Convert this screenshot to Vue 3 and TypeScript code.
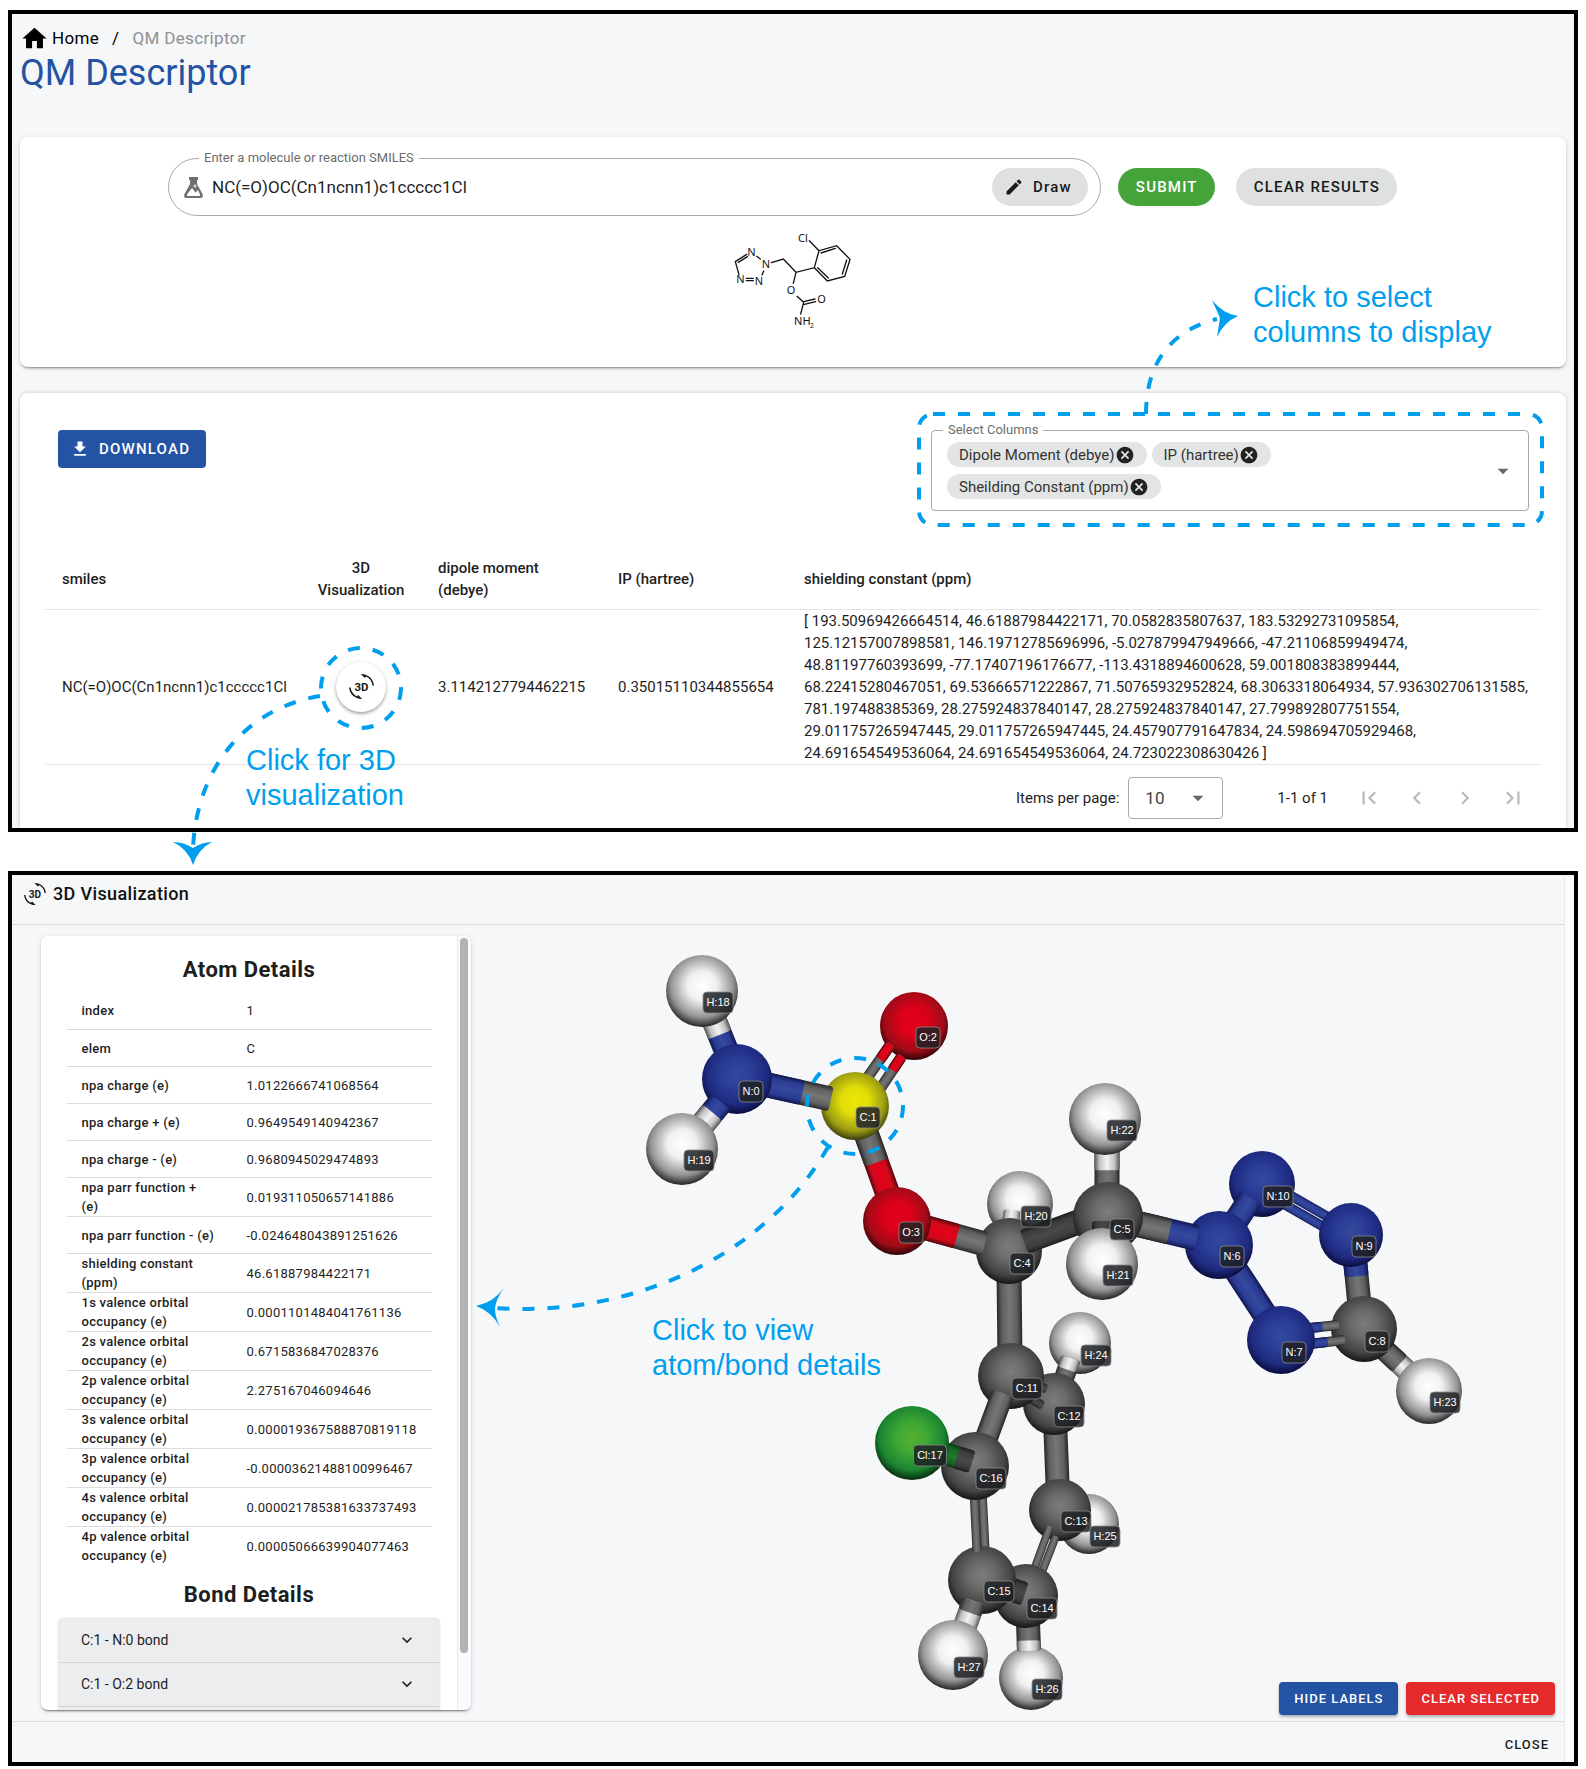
<script setup lang="ts">
import { ref } from 'vue'

const smiles = ref('NC(=O)OC(Cn1ncnn1)c1ccccc1Cl')
const pageSize = ref('10')
const columns = ref(['Dipole Moment (debye)', 'IP (hartree)', 'Sheilding Constant (ppm)'])
const shielding = [
  '[ 193.50969426664514, 46.61887984422171, 70.0582835807637, 183.53292731095854,',
  '125.12157007898581, 146.19712785696996, -5.027879947949666, -47.21106859949474,',
  '48.81197760393699, -77.17407196176677, -113.4318894600628, 59.001808383899444,',
  '68.22415280467051, 69.53666571222867, 71.50765932952824, 68.3063318064934, 57.936302706131585,',
  '781.197488385369, 28.275924837840147, 28.275924837840147, 27.799892807751554,',
  '29.011757265947445, 29.011757265947445, 24.457907791647834, 24.598694705929468,',
  '24.691654549536064, 24.691654549536064, 24.723022308630426 ]',
]
const pagers = [
  { name: 'First page', d: 'M18.41,16.59L13.82,12L18.41,7.41L17,6L11,12L17,18L18.41,16.59M6,6H8V18H6V6Z' },
  { name: 'Previous page', d: 'M15.41,16.58L10.83,12L15.41,7.41L14,6L8,12L14,18L15.41,16.58Z' },
  { name: 'Next page', d: 'M8.59,16.58L13.17,12L8.59,7.41L10,6L16,12L10,18L8.59,16.58Z' },
  { name: 'Last page', d: 'M5.59,7.41L10.18,12L5.59,16.59L7,18L13,12L7,6L5.59,7.41M16,6H18V18H16V6Z' },
]
const details: [string, string][] = [
  ['index', '1'],
  ['elem', 'C'],
  ['npa charge (e)', '1.0122666741068564'],
  ['npa charge + (e)', '0.9649549140942367'],
  ['npa charge - (e)', '0.9680945029474893'],
  ['npa parr function +\n(e)', '0.019311050657141886'],
  ['npa parr function - (e)', '-0.024648043891251626'],
  ['shielding constant\n(ppm)', '46.61887984422171'],
  ['1s valence orbital\noccupancy (e)', '0.0001101484041761136'],
  ['2s valence orbital\noccupancy (e)', '0.6715836847028376'],
  ['2p valence orbital\noccupancy (e)', '2.275167046094646'],
  ['3s valence orbital\noccupancy (e)', '0.000019367588870819118'],
  ['3p valence orbital\noccupancy (e)', '-0.00003621488100996467'],
  ['4s valence orbital\noccupancy (e)', '0.000021785381633737493'],
  ['4p valence orbital\noccupancy (e)', '0.00005066639904077463'],
]
const bonds = ['C:1 - N:0 bond', 'C:1 - O:2 bond']

interface Atom { kind: 'atom'; el: string; x: number; y: number; r: number }
interface Stick { kind: 'stick'; x: number; y: number; len: number; angle: number; w: number; fill: string }
type Shape = Atom | Stick

const atom = (el: string, x: number, y: number, r: number): Atom[] => [{ kind: 'atom', el, x, y, r }]

// A stick runs from a to b; the part before m takes the first colour, the rest the second.
function stick(w: number, from: string, to: string, x1: number, y1: number, x2: number, y2: number, m = 0.5): Stick[] {
  const len = Math.hypot(x2 - x1, y2 - y1)
  const angle = (Math.atan2(y2 - y1, x2 - x1) * 180) / Math.PI
  const end: Stick = { kind: 'stick', x: x1, y: y1, len, angle, w, fill: to }
  return from === to ? [end] : [end, { ...end, len: len * m, fill: from }]
}

// Shapes from the back of the scene to the front.
const shapes: Shape[] = [
  ...atom('H', 1020, 1204, 33),
  ...stick(17, 'h', 'h', 1012, 1210, 1010, 1230),
  ...atom('O', 914, 1026, 34),
  ...stick(11, 'o', 'c', 891, 1044, 865, 1081, 0.42),
  ...stick(11, 'o', 'c', 902, 1056, 878, 1092, 0.4),
  ...stick(25, 'c', 'o', 862, 1122, 890, 1200, 0.52),
  ...atom('Y', 855, 1106, 34),
  ...stick(25, 'n', 'c', 745, 1080, 831, 1099, 0.67),
  ...stick(25, 'h', 'n', 706, 1000, 730, 1060, 0.58),
  ...atom('N', 737, 1079, 35),
  ...atom('H', 702, 991, 36),
  ...stick(25, 'h', 'n', 688, 1142, 721, 1102, 0.74),
  ...atom('H', 682, 1149, 36),
  ...stick(25, 'c', 'c', 1009, 1270, 1010, 1360),
  ...atom('C', 1009, 1251, 33),
  ...stick(25, 'o', 'c', 905, 1222, 985, 1244, 0.65),
  ...atom('O', 897, 1221, 34),
  ...stick(25, 'd', 'd', 1024, 1242, 1084, 1220),
  ...stick(25, 'h', 'c', 1107, 1140, 1107, 1195, 0.55),
  ...stick(10, 'n', 'n', 1288, 1194, 1335, 1221),
  ...stick(10, 'n', 'n', 1282, 1203, 1329, 1230),
  ...stick(24, 'n', 'c', 1354, 1250, 1360, 1310, 0.44),
  ...atom('N', 1351, 1235, 32),
  ...atom('N', 1262, 1184, 33),
  ...stick(25, 'n', 'n', 1251, 1198, 1230, 1230),
  ...stick(25, 'n', 'n', 1226, 1255, 1275, 1330),
  ...stick(22, 'c', 'h', 1375, 1341, 1415, 1378, 0.62),
  ...atom('C', 1364, 1329, 33),
  ...stick(10, 'n', 'c', 1300, 1329, 1339, 1325, 0.58),
  ...stick(10, 'n', 'c', 1300, 1345, 1345, 1340, 0.62),
  ...atom('N', 1281, 1340, 34),
  ...atom('N', 1219, 1245, 34),
  ...stick(26, 'c', 'n', 1125, 1221, 1197, 1238, 0.62),
  ...atom('C', 1108, 1217, 35),
  ...atom('H', 1105, 1119, 36),
  ...stick(22, 'd', 'd', 1103, 1221, 1103, 1240),
  ...atom('H', 1102, 1264, 36),
  ...atom('H', 1429, 1391, 33),
  ...atom('H', 1080, 1343, 31),
  ...stick(20, 'h', 'c', 1071, 1358, 1060, 1390, 0.36),
  ...atom('H', 1089, 1524, 30),
  ...stick(24, 'c', 'c', 1055, 1420, 1058, 1495),
  ...atom('C', 1054, 1404, 31),
  ...atom('C', 1060, 1510, 31),
  ...stick(9, 'd', 'd', 1047, 1389, 1030, 1384),
  ...stick(9, 'd', 'd', 1043, 1406, 1020, 1392),
  ...stick(8, 'c', 'c', 1050, 1526, 1034, 1570),
  ...stick(8, 'c', 'c', 1056, 1536, 1042, 1572),
  ...atom('C', 1011, 1376, 33),
  ...atom('H', 1031, 1678, 32),
  ...stick(24, 'h', 'c', 1029, 1651, 1028, 1622, 0.36),
  ...atom('C', 1026, 1596, 32),
  ...stick(24, 'd', 'd', 1025, 1594, 1000, 1586),
  ...stick(23, 'c', 'c', 1003, 1393, 982, 1450),
  ...stick(9, 'c', 'c', 985, 1549, 982, 1490),
  ...atom('C', 982, 1580, 34),
  ...stick(9, 'c', 'c', 977, 1552, 974, 1490),
  ...atom('C', 975, 1466, 34),
  ...stick(23, 'd', 'g', 972, 1462, 930, 1449, 0.36),
  ...atom('G', 912, 1443, 37),
  ...stick(24, 'c', 'h', 974, 1601, 960, 1640, 0.3),
  ...atom('H', 953, 1655, 35),
]
const tags: [string, number, number][] = [
  ['H:18', 718, 1002], ['N:0', 751, 1091], ['H:19', 699, 1160], ['O:2', 928, 1037], ['C:1', 868, 1117],
  ['O:3', 911, 1232], ['C:4', 1022, 1263], ['H:20', 1036, 1216], ['H:22', 1122, 1130], ['C:5', 1122, 1229],
  ['H:21', 1118, 1275], ['N:10', 1278, 1196], ['N:6', 1232, 1256], ['N:9', 1364, 1246], ['N:7', 1294, 1352],
  ['C:8', 1377, 1341], ['H:23', 1445, 1402], ['H:24', 1096, 1355], ['C:11', 1027, 1388], ['C:12', 1069, 1416],
  ['Cl:17', 930, 1455], ['C:16', 991, 1478], ['C:13', 1076, 1521], ['H:25', 1105, 1536], ['C:15', 999, 1591],
  ['C:14', 1042, 1608], ['H:27', 969, 1667], ['H:26', 1047, 1689],
]
const tagWidth = (t: string) => (t.length === 3 ? 24 : t.length === 4 ? 30 : 33)

const atomStops: Record<string, string[]> = {
  H: ['#ffffff', '#f0f0f0', '#939393', '#1c1c1c'],
  C: ['#7c7c7b', '#6a6a69', '#444443', '#121212'],
  N: ['#34489b', '#2c3e97', '#1e2a80', '#080b34'],
  O: ['#e4001b', '#dc001a', '#a00c17', '#280306'],
  Y: ['#ece605', '#e2de08', '#9c9c12', '#35360d'],
  G: ['#58b030', '#3fa835', '#1c8531', '#05260c'],
}
const stickStops: Record<string, string[]> = {
  h: ['#8d8d8d', '#f3f3f3', '#c2c2c2', '#555555'],
  c: ['#4b4b4b', '#757675', '#5e5f5e', '#262626'],
  d: ['#2b2b2b', '#474847', '#3c3d3c', '#1d1d1d'],
  n: ['#24348c', '#34499c', '#2a3b93', '#10174e'],
  o: ['#a50013', '#e4001b', '#cf0a1b', '#55060c'],
  g: ['#14501f', '#1f7a2c', '#186425', '#0b3413'],
}
const isTwoLine = (s: string) => s.includes('\n')
</script>

<template>
  <div class="page">
    <section class="frame">
      <nav class="crumbs" aria-label="Breadcrumb">
        <svg class="home" viewBox="0 0 24 24"><path d="M10,20V14H14V20H19V12H22L12,3L2,12H5V20H10Z" /></svg>
        <a href="#home">Home</a>
        <span class="slash">/</span>
        <span class="here">QM Descriptor</span>
      </nav>
      <h1>QM Descriptor</h1>

      <form class="card query" @submit.prevent>
        <div class="query-row">
          <div class="outlined smiles">
            <label class="float" for="smiles">Enter a molecule or reaction SMILES</label>
            <svg class="flask" viewBox="0 0 19 21">
              <path fill="#6f6f6f" fill-rule="evenodd" d="M5 0h9v3h-1v4l5.500 10q1.500 4-2 4H2.500q-3.500 0-2-4L6 7V3H5zM3 17.500q-.6 1.500.8 1.500h11.400q1.400 0 .8-1.500L14 13l-2.500 2.500L8 11z" />
              <path stroke="#fff" d="M9.500 9h3M11 7.500v3" />
            </svg>
            <input id="smiles" v-model="smiles" type="text" spellcheck="false" />
            <button type="button" class="pill">
              <svg class="i20" viewBox="0 0 24 24"><path d="M20.71,7.04C21.1,6.65 21.1,6 20.71,5.63L18.37,3.29C18,2.9 17.35,2.9 16.96,3.29L15.12,5.12L18.87,8.87M3,17.25V21H6.75L17.81,9.93L14.06,6.18L3,17.25Z" /></svg>
              Draw
            </button>
          </div>
          <button type="submit" class="pill submit">SUBMIT</button>
          <button type="button" class="pill clear">CLEAR RESULTS</button>
        </div>
        <svg class="mol2d" viewBox="549 330 360 300" role="img" aria-label="2D structure">
          <g fill="none" stroke="#111" stroke-width="4" stroke-linecap="round">
            <path d="M590 406L556 428L567 467M592 413L565 430M620 412L631 420M641 456L636 468M589 478H610M589 485H610" />
            <path d="M664 431L700 420L738 460L793 446L832 486L884 472L900 421L860 380L807 395L793 446M803 446L835 477M877 465L890 423M856 388L813 402M807 395L778 365M738 460L730 493" />
            <path d="M741 532L761 550L752 585M761 548L795 540M763 556L797 548" />
          </g>
          <g class="mol-text">
            <text x="604" y="411">N</text><text x="648" y="446">N</text><text x="627" y="497">N</text><text x="571" y="493">N</text>
            <text x="759" y="368">Cl</text><text x="723" y="525">O</text><text x="815" y="552">O</text><text x="757" y="618">NH</text>
            <text x="786" y="627" class="sub">2</text>
          </g>
        </svg>
      </form>

      <div class="card results">
        <div class="toolbar">
          <button type="button" class="download">
            <svg class="i20" viewBox="0 0 24 24"><path d="M5,20H19V18H5M19,9H15V3H9V9H5L12,16L19,9Z" /></svg>
            DOWNLOAD
          </button>
          <div class="outlined columns" role="group" aria-labelledby="cols-label">
            <span id="cols-label" class="float">Select Columns</span>
            <div class="chips">
              <span v-for="c in columns" :key="c" class="chip">{{ c }}<button type="button" :aria-label="'Remove ' + c">
                <svg class="i20" viewBox="0 0 24 24"><path d="M12,2C17.53,2 22,6.47 22,12C22,17.53 17.53,22 12,22C6.47,22 2,17.53 2,12C2,6.47 6.47,2 12,2M15.59,7L12,10.59L8.41,7L7,8.41L10.59,12L7,15.59L8.41,17L12,13.41L15.59,17L17,15.59L13.41,12L17,8.41L15.59,7Z" /></svg>
              </button></span>
            </div>
            <button type="button" class="caret-btn" aria-label="Open columns">
              <svg class="caret" viewBox="0 0 24 24"><path d="M7,10L12,15L17,10H7Z" /></svg>
            </button>
          </div>
        </div>

        <table class="data">
          <colgroup><col class="w-smiles" /><col class="w-3d" /><col class="w-dip" /><col class="w-ip" /><col /></colgroup>
          <thead>
            <tr><th>smiles</th><th class="mid">3D<br />Visualization</th><th>dipole moment<br />(debye)</th><th>IP (hartree)</th><th>shielding constant (ppm)</th></tr>
          </thead>
          <tbody>
            <tr>
              <td>{{ smiles }}</td>
              <td class="mid">
                <button type="button" class="fab" aria-label="3D visualization">
                  <svg class="rot" viewBox="0 0 24 24"><path d="M7.520 21.480C4.250 19.940 1.910 16.760 1.550 13H.05C.56 19.160 5.710 24 12 24l.66-.03-3.810-3.810-1.330 1.320zM12 0l-.66.03 3.810 3.810 1.330-1.330c3.270 1.550 5.610 4.720 5.960 8.480h1.500C23.440 4.840 18.290 0 12 0z" /><text x="12" y="16">3D</text></svg>
                </button>
              </td>
              <td>3.1142127794462215</td>
              <td>0.35015110344855654</td>
              <td><div v-for="l in shielding" :key="l">{{ l }}</div></td>
            </tr>
          </tbody>
        </table>

        <div class="pager">
          <label for="page-size">Items per page:</label>
          <div class="size">
            <select id="page-size" v-model="pageSize"><option>10</option><option>25</option></select>
            <svg class="caret" viewBox="0 0 24 24"><path d="M7,10L12,15L17,10H7Z" /></svg>
          </div>
          <span class="range">1-1 of 1</span>
          <div class="nav">
            <button v-for="p in pagers" :key="p.name" type="button" :aria-label="p.name" disabled>
              <svg class="i26" viewBox="0 0 24 24"><path :d="p.d" /></svg>
            </button>
          </div>
        </div>
      </div>
    </section>

    <section class="frame dialog">
      <div class="dialog-main">
        <header>
          <svg class="rot small" viewBox="0 0 24 24"><path d="M7.520 21.480C4.250 19.940 1.910 16.760 1.550 13H.05C.56 19.160 5.710 24 12 24l.66-.03-3.810-3.810-1.330 1.320zM12 0l-.66.03 3.810 3.810 1.330-1.330c3.270 1.550 5.610 4.720 5.960 8.480h1.500C23.440 4.840 18.290 0 12 0z" /><text x="12" y="16">3D</text></svg>
          <h2>3D Visualization</h2>
        </header>
        <div class="dialog-body">
          <aside class="panel">
            <div class="panel-content">
              <h3>Atom Details</h3>
              <table class="props">
                <tbody>
                  <tr v-for="[k, v] in details" :key="k" :class="{ two: isTwoLine(k) }"><th scope="row">{{ k }}</th><td>{{ v }}</td></tr>
                </tbody>
              </table>
              <h3 class="second">Bond Details</h3>
              <div class="accordion">
                <details v-for="b in bonds" :key="b">
                  <summary>{{ b }}<svg class="i20" viewBox="0 0 24 24"><path d="M7.410,8.580L12,13.170L16.590,8.580L18,10L12,16L6,10L7.410,8.580Z" /></svg></summary>
                </details>
              </div>
            </div>
            <div class="track"><div class="thumb"></div></div>
          </aside>

          <div class="viewer">
            <svg class="scene" viewBox="471 925 1093 796" role="img" aria-label="3D molecule">
              <defs>
                <radialGradient v-for="(s, k) in atomStops" :id="'a' + k" :key="k" cx="50%" cy="43%" r="58%">
                  <stop offset="0" :stop-color="s[0]" /><stop offset=".35" :stop-color="s[1]" /><stop offset=".75" :stop-color="s[2]" /><stop offset="1" :stop-color="s[3]" />
                </radialGradient>
                <linearGradient v-for="(s, k) in stickStops" :id="'s' + k" :key="k" x1="0" y1="0" x2="0" y2="1">
                  <stop offset="0" :stop-color="s[3]" /><stop offset=".2" :stop-color="s[2]" /><stop offset=".5" :stop-color="s[1]" /><stop offset=".8" :stop-color="s[2]" /><stop offset="1" :stop-color="s[3]" />
                </linearGradient>
              </defs>
              <template v-for="(s, i) in shapes" :key="i">
                <circle v-if="s.kind === 'atom'" :cx="s.x" :cy="s.y" :r="s.r" :fill="`url(#a${s.el})`" />
                <rect v-else :x="0" :y="-s.w / 2" :width="s.len" :height="s.w" :rx="3" :fill="`url(#s${s.fill})`" :transform="`translate(${s.x} ${s.y}) rotate(${s.angle})`" />
              </template>
              <g v-for="[t, x, y] in tags" :key="t" class="tag">
                <rect :x="x - tagWidth(t) / 2" :y="y - 10" :width="tagWidth(t)" height="21" rx="4" />
                <text :x="x" :y="y + 4">{{ t }}</text>
              </g>
            </svg>
            <div class="viewer-actions">
              <button type="button" class="flat blue">HIDE LABELS</button>
              <button type="button" class="flat red">CLEAR SELECTED</button>
            </div>
          </div>
        </div>
        <footer><button type="button" class="close">CLOSE</button></footer>
      </div>
      <div class="dialog-track"></div>
    </section>

    <svg class="notes" viewBox="0 0 1586 1769" width="1586" height="1769">
      <g fill="none" stroke="#009fee" stroke-width="4" stroke-dasharray="12 13">
        <rect x="919" y="414" width="623" height="111" rx="14" />
        <path d="M1146 414C1146 362 1172 330 1217 319" />
        <circle cx="361" cy="688" r="40" />
        <path d="M320 696C248 708 197 765 193 848" />
        <circle cx="855" cy="1106" r="48" />
        <path d="M828 1147C770 1250 640 1318 494 1308" />
      </g>
      <g fill="#009fee">
        <path d="M1238 316Q1223 314 1212 300L1220 318L1217 337Q1224 322 1238 316Z" />
        <path d="M193 865Q188 849 173 842Q184 842 193 848Q202 842 212 842Q198 849 193 865Z" />
        <path d="M476 1306Q494 1302 504 1288Q496 1299 495 1308Q495 1317 500 1327Q491 1311 476 1306Z" />
      </g>
      <g class="note-text">
        <text x="1253" y="307">Click to select</text><text x="1253" y="342">columns to display</text>
        <text x="246" y="770">Click for 3D</text><text x="246" y="805">visualization</text>
        <text x="652" y="1340">Click to view</text><text x="652" y="1375">atom/bond details</text>
      </g>
    </svg>
  </div>
</template>

<style>
body { background: #fff; }
</style>

<style scoped>
* { box-sizing: border-box; }
.page { position: relative; display: flex; flex-direction: column; gap: 39px; padding: 10px 8px 2px; font-family: Roboto, "Liberation Sans", sans-serif; color: #1e1e1e; }
.frame { border: 4px solid #000; background: #f5f7f9; }
button { font-family: inherit; border: 0; cursor: pointer; padding: 0; background: none; color: inherit; }
svg { display: block; flex: none; }
.i20 { width: 20px; height: 20px; fill: currentColor; }
.i26 { width: 26px; height: 26px; fill: #b9b9b9; }

.crumbs { display: flex; align-items: center; height: 28px; margin: 10px 8px 0; font-size: 17px; letter-spacing: .02em; color: #000; }
.crumbs a { color: inherit; text-decoration: none; margin-left: 3px; }
.home { width: 29px; height: 29px; }
.slash { margin: 0 13px; }
.here { color: #8f9091; }
h1 { margin: 0 8px 43px; font-size: 36px; line-height: 42px; font-weight: 400; color: #2453a3; }

.card { margin: 0 8px; background: #fff; border-radius: 8px; box-shadow: 0 3px 1px -2px rgba(0,0,0,.2), 0 2px 2px rgba(0,0,0,.14), 0 1px 5px rgba(0,0,0,.12); }
.query { padding: 21px 0 38px; }
.query-row { display: flex; align-items: center; margin: 0 169px 0 148px; }
.outlined { position: relative; border: 1px solid #a9a9a9; border-radius: 4px; }
.float { position: absolute; top: -9px; left: 11px; padding: 0 5px; background: #fff; font-size: 13px; line-height: 16px; color: #6c6c6c; }
.smiles { flex: 1; display: flex; align-items: center; height: 58px; border-radius: 29px; padding: 0 12px 0 15px; }
.smiles .float { left: 30px; }
.flask { width: 19px; height: 21px; }
input { flex: 1; min-width: 0; margin-left: 9px; border: 0; outline: 0; padding: 0; background: none; font-family: inherit; font-size: 17px; color: #1e1e1e; }
.pill { display: flex; align-items: center; justify-content: center; height: 38px; padding: 0 17px 0 18px; border-radius: 19px; background: #dfe1e0; font-size: 15px; font-weight: 500; letter-spacing: .08em; color: #1a1a1a; white-space: nowrap; }
.smiles .pill { gap: 9px; padding: 0 16px 0 12px; }
.query-row .submit { margin-left: 17px; background: #45a439; color: #fff; }
.clear { margin-left: 21px; }
.mol2d { width: 120px; height: 100px; margin: 13px auto 0; }
.mol-text { font-family: "Noto Sans", sans-serif; font-size: 33px; text-anchor: middle; fill: #111; }
.mol-text .sub { font-size: 20px; }

.results { margin-top: 26px; padding: 37px 25px 9px; border-radius: 8px 8px 0 0; box-shadow: 0 0 4px rgba(0,0,0,.2); }
.toolbar { display: flex; justify-content: space-between; align-items: flex-start; padding: 0 12px 0 13px; }
.download { display: flex; align-items: center; gap: 9px; height: 38px; padding: 0 16px 0 12px; border-radius: 4px; background: #2453a3; color: #fff; font-size: 15px; font-weight: 500; letter-spacing: .08em; }
.columns { display: flex; align-items: center; width: 598px; min-height: 81px; padding: 11px 12px 11px 15px; }
.chips { display: flex; flex-wrap: wrap; gap: 7px 5px; flex: 0 1 400px; }
.chip { display: flex; align-items: center; height: 25px; padding: 0 12px; border-radius: 13px; background: #e3e5e4; font-size: 15px; color: #333; }
.chip button { color: #222; }
.caret { width: 26px; height: 26px; fill: #666; }
.caret-btn { margin-left: auto; }

table { border-collapse: collapse; }
th, td { text-align: left; }
.data { width: 100%; margin-top: 38px; table-layout: fixed; font-size: 15px; line-height: 22px; }
.data th, .data td { padding: 0 17px; border-bottom: 1px solid #e4e5e6; white-space: nowrap; }
.data th { height: 60px; font-weight: 500; }
.data td { height: 155px; }
.data .mid { padding: 0; text-align: center; }
.w-smiles { width: 256px; }
.w-3d { width: 120px; }
.w-dip { width: 180px; }
.w-ip { width: 186px; }
.fab { display: inline-flex; align-items: center; justify-content: center; width: 50px; height: 50px; border-radius: 50%; background: #fff; vertical-align: middle; box-shadow: 0 2px 3px rgba(0,0,0,.28), 0 1px 5px rgba(0,0,0,.12); }
.rot { width: 25px; height: 25px; fill: #1a1a1a; overflow: visible; }
.rot text { font-size: 11px; font-weight: 700; text-anchor: middle; }
.rot.small { width: 22px; height: 22px; }

.pager { display: flex; align-items: center; justify-content: flex-end; padding: 12px 15px 0 0; font-size: 15px; }
.size { position: relative; margin-left: 9px; }
.size select { appearance: none; width: 95px; height: 42px; padding: 0 16px; border: 1px solid #a9a9a9; border-radius: 4px; background: #fff; font-family: inherit; font-size: 17px; color: #444; }
.size .caret { position: absolute; top: 8px; right: 12px; pointer-events: none; }
.range { margin-left: 54px; }
.nav { display: flex; gap: 22px; margin-left: 28px; }

.dialog { display: flex; background: #f6f7f9; }
.dialog-main { flex: 1; min-width: 0; }
.dialog-track { width: 10px; background: #fafbfe; border-left: 1px solid #e6e7e8; }
header { display: flex; align-items: center; gap: 7px; height: 50px; padding: 0 12px 10px; border-bottom: 1px solid #d9dbdc; }
h2 { margin: 0; font-size: 18px; line-height: 28px; font-weight: 500; letter-spacing: .02em; color: #111; }
.dialog-body { display: flex; height: 796px; }
.panel { display: flex; width: 430px; margin: 11px 0 11px 29px; overflow: hidden; background: #fff; border-radius: 7px; box-shadow: 0 3px 1px -2px rgba(0,0,0,.3), 0 2px 2px rgba(0,0,0,.14), 0 1px 5px rgba(0,0,0,.12); }
.panel-content { flex: 1; padding: 19px 18px 0; overflow: hidden; }
.track { width: 14px; border-left: 1px solid #e8e9ea; background: #fafbfe; padding: 2px 3px 57px 2px; }
.thumb { height: 100%; border-radius: 4px; background: #b3b3b3; }
h3 { margin: 0; text-align: center; font-size: 22px; line-height: 30px; font-weight: 700; letter-spacing: .02em; }
.props { width: 365px; margin: 8px auto 0; font-size: 13px; line-height: 19px; letter-spacing: .02em; }
.props th, .props td { height: 37px; padding: 0 0 0 15px; border-bottom: 1px solid #dcdddd; }
.props .two th, .props .two td { height: 39px; }
.props th { width: 165px; font-weight: 500; white-space: pre; }
.props tr:last-child > * { border-bottom: 0; }
.second { margin-top: 14px; }
.accordion { margin-top: 9px; padding-bottom: 20px; border-radius: 4px 4px 0 0; background: #ecedef; box-shadow: 0 0 3px rgba(0,0,0,.25); }
details { border-bottom: 1px solid #cfd1d2; }
summary { display: flex; align-items: center; justify-content: space-between; height: 43px; padding: 0 22px; font-size: 14px; list-style: none; }
.viewer { position: relative; flex: 1; min-width: 0; }
.scene { width: 100%; height: 100%; }
.tag rect { fill: #202124; fill-opacity: .85; stroke: #8a8a8a; stroke-opacity: .8; }
.tag text { font-family: "Liberation Sans", sans-serif; font-size: 11px; fill: #fff; text-anchor: middle; }
.viewer-actions { position: absolute; right: 9px; bottom: 6px; display: flex; gap: 8px; }
.flat { height: 33px; padding: 0 15px; border-radius: 4px; font-size: 13px; font-weight: 500; letter-spacing: 1px; color: #fff; box-shadow: 0 2px 3px rgba(0,0,0,.3); }
.blue { background: #2453a3; }
.red { background: #e42a2a; }
footer { display: flex; justify-content: flex-end; height: 41px; padding: 8px 15px 0; border-top: 1px solid #d9dbdc; }
.close { height: 30px; font-size: 13px; font-weight: 500; letter-spacing: 1px; }

.notes { position: absolute; top: 0; left: 0; pointer-events: none; }
.note-text { font-family: "Liberation Sans", Arial, sans-serif; font-size: 29px; fill: #009fee; }
</style>
